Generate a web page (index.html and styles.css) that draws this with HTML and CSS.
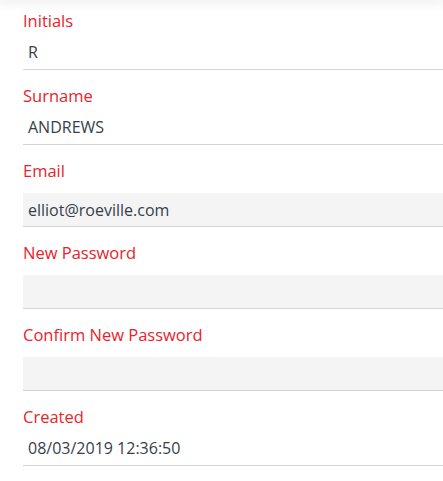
FILE: index.html
```html
<!DOCTYPE html>
<html lang="en">
<head>
    <meta charset="UTF-8">
    <meta name="viewport" content="width=device-width, initial-scale=1.0">
    <title>Account Details</title>
    <link rel="stylesheet" href="styles.css">
</head>
<body>
    <div class="topbar"></div>
    <div class="form">
        <!-- Read only fields -->
        <div class="field readonly">
            <label>Initials</label>
            <div class="value">R</div>
        </div>
        <div class="field readonly">
            <label>Surname</label>
            <div class="value">ANDREWS</div>
        </div>

        <!-- Editable fields -->
        <div class="field">
            <label for="email">Email</label>
            <input type="text" id="email" value="elliot@roeville.com">
        </div>
        <div class="field">
            <label for="newPassword">New Password</label>
            <input type="password" id="newPassword">
        </div>
        <div class="field">
            <label for="confirmPassword">Confirm New Password</label>
            <input type="password" id="confirmPassword">
        </div>

        <div class="field readonly">
            <label>Created</label>
            <div class="value">08/03/2019 12:36:50</div>
        </div>
    </div>
</body>
</html>
```
FILE: styles.css
```css
body {
    font-family: "Open Sans", Arial, sans-serif;
    background-color: white;
    margin: 0;
    padding: 0;
    overflow: hidden;
}

.topbar {
    height: 0;
    box-shadow: 0px 0px 10px 2px rgba(120, 90, 90, 0.18);
}

.form {
    padding: 10px 0 0 23px;
}

.field {
    padding-bottom: 15px;
}

label {
    display: block;
    font-size: 16.5px;
    line-height: 22px;
    color: #e8232b;
    margin-bottom: 11px;
}

.readonly label {
    margin-bottom: 4px;
}

.value, input {
    display: block;
    box-sizing: border-box;
    width: 100%;
    height: 34px;
    font-family: "Open Sans", Arial, sans-serif;
    font-size: 16px;
    line-height: 33px;
    color: #36404c;
    padding: 0 5px;
    margin: 0;
    border: none;
    border-bottom: 1px solid #d4d4d4;
    border-radius: 0;
    outline: none;
}

input {
    background-color: #f4f4f4;
}
```
